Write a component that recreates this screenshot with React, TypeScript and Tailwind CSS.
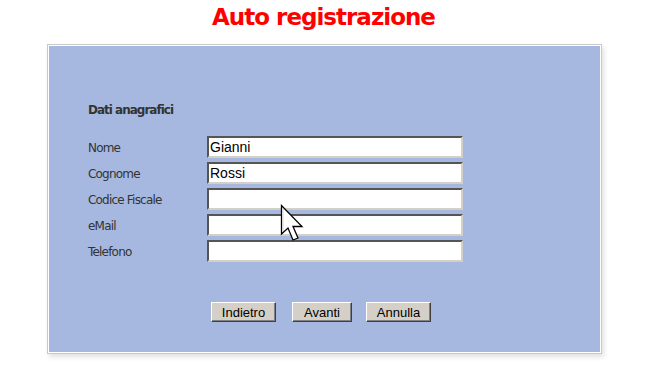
import React from 'react'

const fields = [
  { label: 'Nome', value: 'Gianni' },
  { label: 'Cognome', value: 'Rossi' },
  { label: 'Codice Fiscale', value: '' },
  { label: 'eMail', value: '' },
  { label: 'Telefono', value: '' },
]

function Cursor() {
  return (
    <svg width="26" height="40" viewBox="0 0 26 40" className="absolute left-[280px] top-[204px]">
      <path
        d="M1.5 1.5 L1.5 30 L8 24 L13 36 L18 34 L13 22.5 L22 22.5 Z"
        fill="#ffffff"
        stroke="#000000"
        strokeWidth="1.3"
        strokeLinejoin="miter"
      />
      <path d="M3 5 L3 27" stroke="#d8d8d8" strokeWidth="1" />
    </svg>
  )
}

export default function App() {
  return (
    <div className="relative w-[647px] h-[365px] bg-white font-['Liberation_Sans',Arial,sans-serif]">
      {/* titolo */}
      <h1 className="pt-[4px] text-center text-[23px] leading-[27px] font-bold text-[#ff0000] font-['DejaVu_Sans',Verdana,sans-serif] tracking-[-1px]">
        Auto registrazione
      </h1>

      {/* pannello */}
      <div className="ml-[47px] mt-[13px] w-[555px] border border-[#c9c9c9] bg-white p-[1px] shadow-[2px_3px_5px_rgba(0,0,0,0.12)]">
        <div className="bg-[#a6b8e0] pl-[39px] pt-[57px] pb-[30px]">
          <div className="text-[12px] leading-[14px] font-bold text-[#333333] font-['DejaVu_Sans',Verdana,sans-serif] tracking-[-1px]">
            Dati anagrafici
          </div>

          <div className="mt-[19px] flex flex-col gap-[4px]">
            {fields.map((f) => (
              <div key={f.label} className="flex items-center h-[22px]">
                <span className="w-[119px] pt-[2px] text-[12px] text-[#333333] font-['DejaVu_Sans',Verdana,sans-serif] tracking-[-0.8px]">
                  {f.label}
                </span>
                <div className="w-[256px] h-[22px] bg-white border-2 border-t-[#555555] border-l-[#555555] border-b-[#d4d0c8] border-r-[#d4d0c8] flex items-center pl-[1px] text-[14px] text-black">
                  {f.value}
                </div>
              </div>
            ))}
          </div>

          <div className="mt-[40px] ml-[123px] flex h-[20px]">
            <button className="w-[65px] h-[20px] bg-[#d4d0c8] border border-t-white border-l-white border-b-[#404040] border-r-[#404040] shadow-[inset_-1px_-1px_0_#808080] text-[13px] leading-none text-black">
              Indietro
            </button>
            <button className="ml-[16px] w-[60px] h-[20px] bg-[#d4d0c8] border border-t-white border-l-white border-b-[#404040] border-r-[#404040] shadow-[inset_-1px_-1px_0_#808080] text-[13px] leading-none text-black">
              Avanti
            </button>
            <button className="ml-[14px] w-[65px] h-[20px] bg-[#d4d0c8] border border-t-white border-l-white border-b-[#404040] border-r-[#404040] shadow-[inset_-1px_-1px_0_#808080] text-[13px] leading-none text-black">
              Annulla
            </button>
          </div>
        </div>
      </div>

      <Cursor />
    </div>
  )
}
